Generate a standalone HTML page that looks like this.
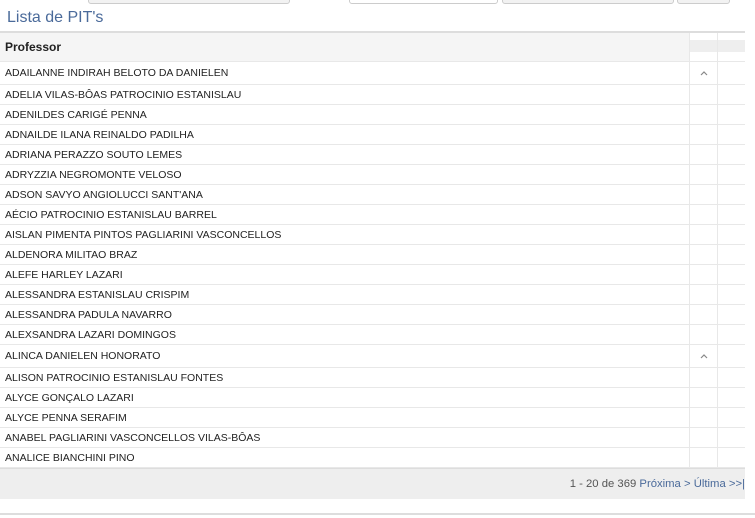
<!DOCTYPE html><html><head><style>
body{margin:0;width:755px;height:518px;background:#fff;font-family:"Liberation Sans",sans-serif;position:relative;overflow:hidden;color:#222}
.btn{position:absolute;top:-6px;height:8px;border:1px solid #ccc;border-radius:3px;background:#f2f2f2}
.title{position:absolute;left:7px;top:9px;font-size:16px;color:#4a6a9a}
.hr{position:absolute;left:0;top:31px;width:745px;height:2px;background:#ddd}
table{position:absolute;left:0;top:33px;border-collapse:collapse;width:745px}
td,th{font-size:10.5px;padding:0 0 0 5px;text-align:left;border-bottom:1px solid #e8e8e8;height:19px}
th{height:28px;background:#f5f5f5;font-size:12px;font-weight:bold}
td.c{width:27px;border-left:1px solid #e8e8e8;padding:0;text-align:center;color:#999;font-size:9px}
th.c{width:27px;padding:0;border-left:1px solid #e8e8e8;background:linear-gradient(#fff 0,#fff 7px,#eee 7px,#eee 19px,#fff 19px)}
tr.t td{height:22px}
.foot{position:absolute;left:0;top:468px;width:745px;height:30px;background:#eeeeee;border-top:1px solid #ddd;font-size:11.3px;color:#555;text-align:right;line-height:30px}
.foot span{color:#4a6a9a}
.bot{position:absolute;left:0;top:513px;width:755px;height:2px;background:#ddd}
</style></head><body>
<div class="btn" style="left:88px;width:200px"></div>
<div class="btn" style="left:349px;width:147px;background:#fff"></div>
<div class="btn" style="left:502px;width:170px"></div>
<div class="btn" style="left:677px;width:51px"></div>
<div class="title">Lista de PIT's</div>
<div class="hr"></div>
<table>
<tr><th>Professor</th><th class="c"></th><th class="c"></th></tr>
<tr class="t"><td>ADAILANNE INDIRAH BELOTO DA DANIELEN</td><td class="c"><svg width="8" height="5" viewBox="0 0 8 5"><path d="M1 4 L4 1 L7 4" stroke="#888" stroke-width="1.2" fill="none"/></svg></td><td class="c"></td></tr>
<tr><td>ADELIA VILAS-BÔAS PATROCINIO ESTANISLAU</td><td class="c"></td><td class="c"></td></tr>
<tr><td>ADENILDES CARIGÉ PENNA</td><td class="c"></td><td class="c"></td></tr>
<tr><td>ADNAILDE ILANA REINALDO PADILHA</td><td class="c"></td><td class="c"></td></tr>
<tr><td>ADRIANA PERAZZO SOUTO LEMES</td><td class="c"></td><td class="c"></td></tr>
<tr><td>ADRYZZIA NEGROMONTE VELOSO</td><td class="c"></td><td class="c"></td></tr>
<tr><td>ADSON SAVYO ANGIOLUCCI SANT'ANA</td><td class="c"></td><td class="c"></td></tr>
<tr><td>AÉCIO PATROCINIO ESTANISLAU BARREL</td><td class="c"></td><td class="c"></td></tr>
<tr><td>AISLAN PIMENTA PINTOS PAGLIARINI VASCONCELLOS</td><td class="c"></td><td class="c"></td></tr>
<tr><td>ALDENORA MILITAO BRAZ</td><td class="c"></td><td class="c"></td></tr>
<tr><td>ALEFE HARLEY LAZARI</td><td class="c"></td><td class="c"></td></tr>
<tr><td>ALESSANDRA ESTANISLAU CRISPIM</td><td class="c"></td><td class="c"></td></tr>
<tr><td>ALESSANDRA PADULA NAVARRO</td><td class="c"></td><td class="c"></td></tr>
<tr><td>ALEXSANDRA LAZARI DOMINGOS</td><td class="c"></td><td class="c"></td></tr>
<tr class="t"><td>ALINCA DANIELEN HONORATO</td><td class="c"><svg width="8" height="5" viewBox="0 0 8 5"><path d="M1 4 L4 1 L7 4" stroke="#888" stroke-width="1.2" fill="none"/></svg></td><td class="c"></td></tr>
<tr><td>ALISON PATROCINIO ESTANISLAU FONTES</td><td class="c"></td><td class="c"></td></tr>
<tr><td>ALYCE GONÇALO LAZARI</td><td class="c"></td><td class="c"></td></tr>
<tr><td>ALYCE PENNA SERAFIM</td><td class="c"></td><td class="c"></td></tr>
<tr><td>ANABEL PAGLIARINI VASCONCELLOS VILAS-BÔAS</td><td class="c"></td><td class="c"></td></tr>
<tr><td>ANALICE BIANCHINI PINO</td><td class="c"></td><td class="c"></td></tr>
</table>
<div class="foot">1 - 20 de 369 <span>Próxima &gt; Última &gt;&gt;|</span></div>
<div class="bot"></div>
</body></html>
